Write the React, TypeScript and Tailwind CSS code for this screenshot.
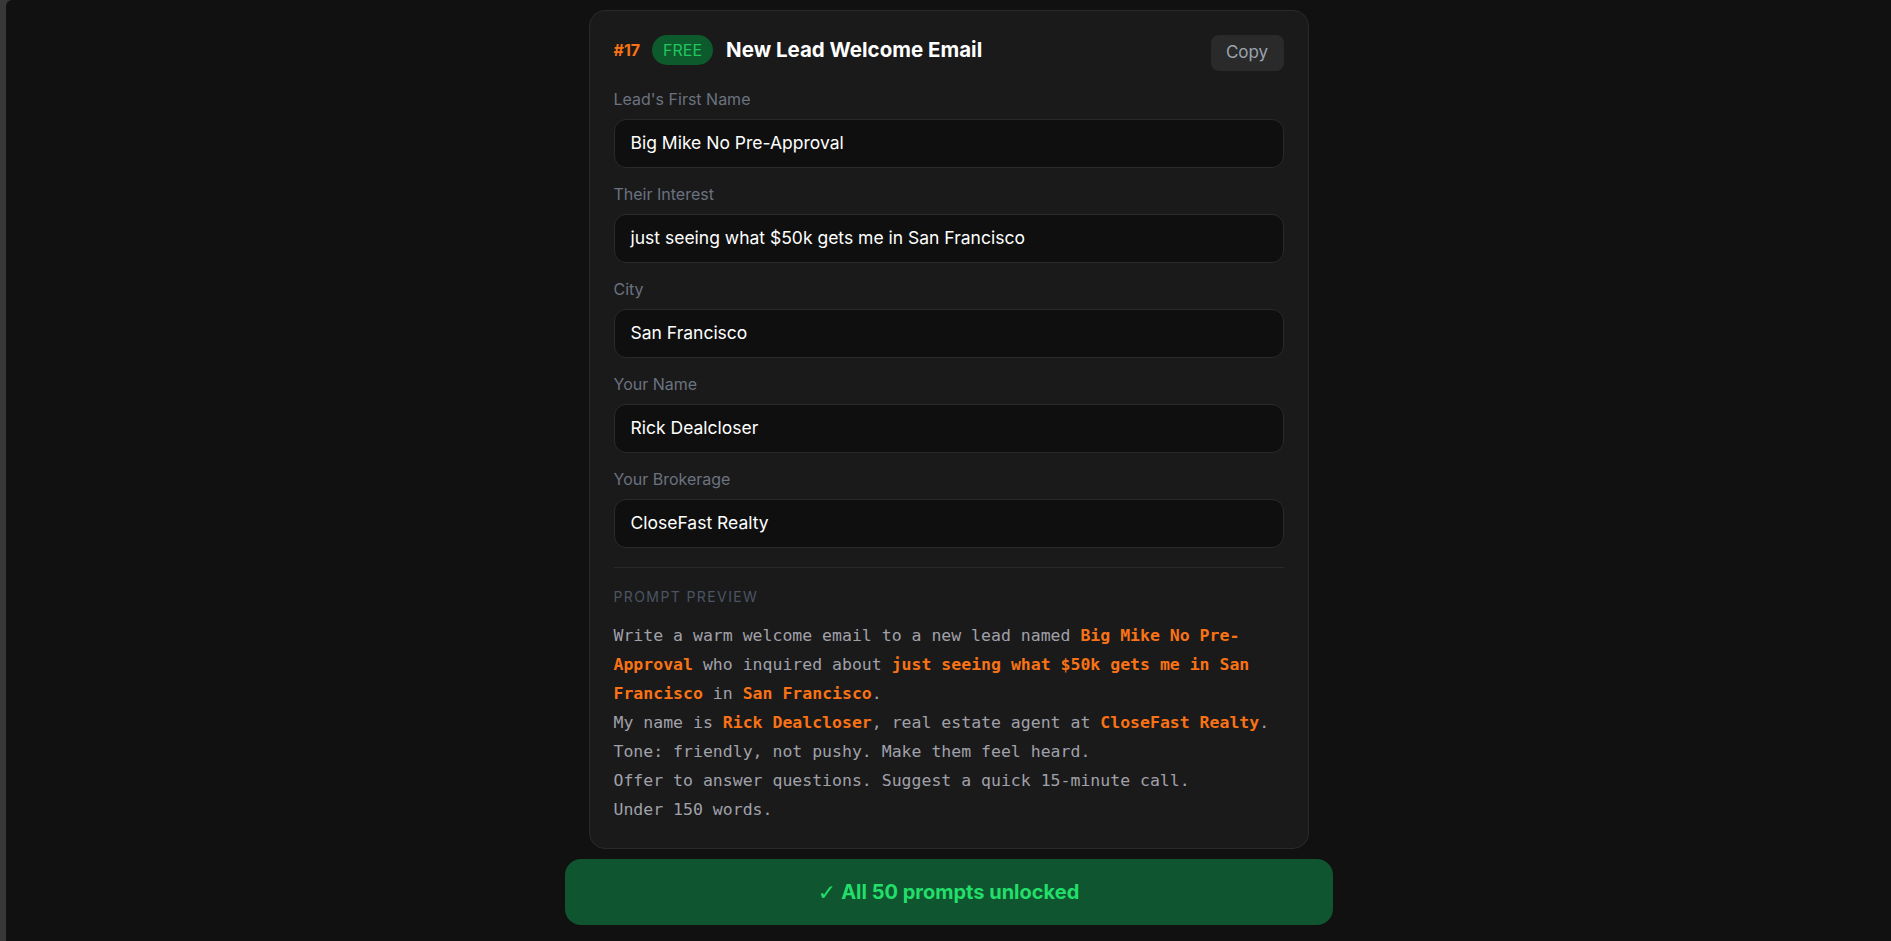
import React from "react";

const fields = [
  { label: "Lead's First Name", value: "Big Mike No Pre-Approval" },
  { label: "Their Interest", value: "just seeing what $50k gets me in San Francisco" },
  { label: "City", value: "San Francisco" },
  { label: "Your Name", value: "Rick Dealcloser" },
  { label: "Your Brokerage", value: "CloseFast Realty" },
];

function H({ children }: { children: React.ReactNode }) {
  return <span className="font-bold text-[#f97316]">{children}</span>;
}

export default function App() {
  return (
    <div className="flex min-h-screen bg-[#383838] font-['Inter',sans-serif]">
      <div className="ml-[6px] flex min-h-screen flex-1 flex-col items-center rounded-tl-[6px] bg-[#111111] pt-[10px]">
        <div className="flex w-[768px] flex-col">
          <div className="mx-6 rounded-2xl border border-[#2a2a2a] bg-[#1a1a1a] px-6 pt-6 pb-6">
            <div className="flex items-start justify-between">
              <div className="flex h-[30px] items-center">
                <span className="text-[16px] font-bold text-[#f97316]">#17</span>
                <span className="ml-[12px] flex h-[30px] items-center rounded-full bg-[#0d5a2c] px-[11px] text-base text-[#22c55e]">
                  FREE
                </span>
                <span className="ml-[13px] text-[20.5px] font-bold text-white">
                  New Lead Welcome Email
                </span>
              </div>
              <button className="h-9 w-[73px] rounded-lg bg-[#2a2a2a] text-[17px] text-[#9ca3af]">
                Copy
              </button>
            </div>

            <div className="mt-4 flex flex-col gap-[14px]">
              {fields.map((f) => (
                <div key={f.label} className="flex flex-col">
                  <label className="mb-2 pt-[1px] text-base leading-[23px] text-[#6b7280]">{f.label}</label>
                  <div className="flex h-[49px] items-center rounded-xl border border-[#2a2a2a] bg-[#0f0f0f] px-4 text-[17.5px] text-white">
                    {f.value}
                  </div>
                </div>
              ))}
            </div>

            <div className="mt-[19px] border-t border-[#2a2a2a] pt-[19px]">
              <div className="text-[14px] leading-5 tracking-[0.1em] text-[#4b5563]">PROMPT PREVIEW</div>
              <div className="mt-[14px] font-['DejaVu_Sans_Mono',monospace] text-[16.5px] leading-[29px] text-[#a1a1aa]">
                <p>
                  Write a warm welcome email to a new lead named <H>Big Mike No Pre-Approval</H> who inquired
                  about <H>just seeing what $50k gets me in San Francisco</H> in <H>San Francisco</H>.
                </p>
                <p>
                  My name is <H>Rick Dealcloser</H>, real estate agent at <H>CloseFast Realty</H>.
                </p>
                <p>Tone: friendly, not pushy. Make them feel heard.</p>
                <p>Offer to answer questions. Suggest a quick 15-minute call.</p>
                <p>Under 150 words.</p>
              </div>
            </div>
          </div>

          <div className="mt-[10px] flex h-[66px] w-full items-center justify-center rounded-2xl bg-[#0f5530] text-[20px] font-bold text-[#22df6a]">
            <span className="font-['DejaVu_Sans',sans-serif] text-[22px] font-normal">✓</span>
            <span className="ml-[5px]">All 50 prompts unlocked</span>
          </div>
        </div>
      </div>
    </div>
  );
}
